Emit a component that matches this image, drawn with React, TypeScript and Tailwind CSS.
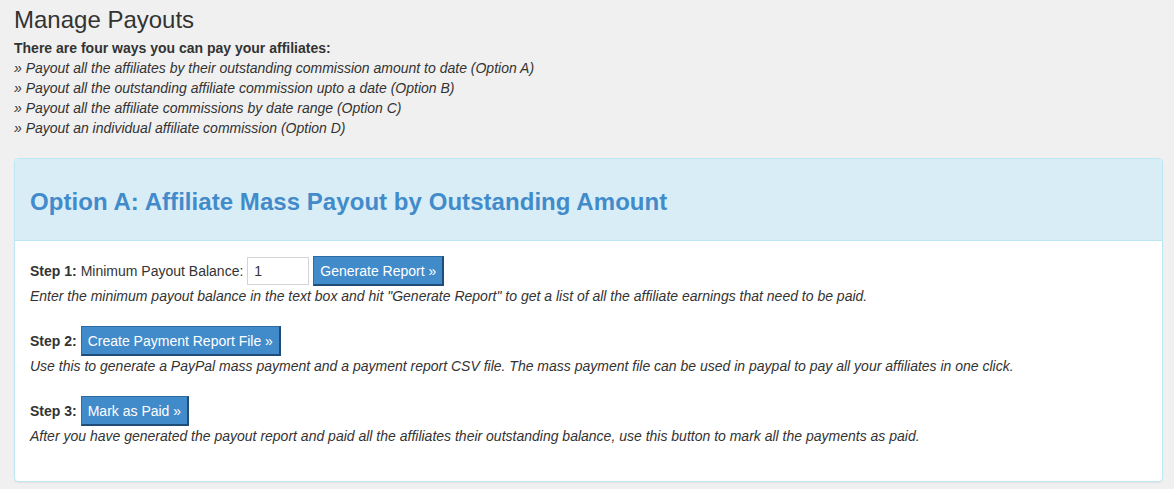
import React from "react";

function BlueButton({ label }: { label: string }) {
  return (
    <button className="h-[30px] px-[6px] bg-[#428bca] text-white text-[14px] leading-[20px] border border-[#2d6ca2] border-r-2 border-b-2 border-r-[#1f4d78] border-b-[#1f4d78]">
      {label}
    </button>
  );
}

function Step({
  n,
  children,
  desc,
}: {
  n: number;
  children: React.ReactNode;
  desc: string;
}) {
  return (
    <div>
      <div className="flex items-center h-[30px]">
        <span className="font-bold">Step {n}:</span>
        {children}
      </div>
      <div className="italic leading-[20px]">{desc}</div>
    </div>
  );
}

export default function App() {
  return (
    <div
      className="min-h-screen bg-[#f0f0f0] text-[#333] text-[14px] leading-[20px] pt-[7px] pb-[8px]"
      style={{ fontFamily: '"Liberation Sans", Arial, sans-serif' }}
    >
      <div className="px-[14px]">
        <h1 className="text-[24px] leading-[26px] text-[#333]">Manage Payouts</h1>
        <div className="mt-[5px]">
          <div className="font-bold">There are four ways you can pay your affiliates:</div>
          <div className="italic">» Payout all the affiliates by their outstanding commission amount to date (Option A)</div>
          <div className="italic">» Payout all the outstanding affiliate commission upto a date (Option B)</div>
          <div className="italic">» Payout all the affiliate commissions by date range (Option C)</div>
          <div className="italic">» Payout an individual affiliate commission (Option D)</div>
        </div>
      </div>

      <div className="ml-[14px] mr-[11px] mt-[20px] bg-white border border-[#bce8f1] rounded-[4px] shadow-[0_1px_2px_rgba(0,0,0,0.06)] overflow-hidden">
        <div className="bg-[#d9edf7] border-b border-[#bce8f1] pl-[15px] pt-[30px] pb-[25px]">
          <h2 className="text-[24px] leading-[26px] font-bold text-[#428bca] tracking-[0.05px]">
            Option A: Affiliate Mass Payout by Outstanding Amount
          </h2>
        </div>
        <div className="pl-[15px] pr-[15px] pt-[15px] pb-[35px] flex flex-col gap-[20px]">
          <Step
            n={1}
            desc={'Enter the minimum payout balance in the text box and hit "Generate Report" to get a list of all the affiliate earnings that need to be paid.'}
          >
            <span className="ml-[4px]">Minimum Payout Balance:</span>
            <input
              defaultValue="1"
              className="ml-[4px] w-[62px] h-[28px] px-[6px] border border-[#d4d4d4] text-[14px] text-[#333] outline-none"
            />
            <span className="ml-[4px]">
              <BlueButton label="Generate Report »" />
            </span>
          </Step>
          <Step
            n={2}
            desc="Use this to generate a PayPal mass payment and a payment report CSV file. The mass payment file can be used in paypal to pay all your affiliates in one click."
          >
            <span className="ml-[4px]">
              <BlueButton label="Create Payment Report File »" />
            </span>
          </Step>
          <Step
            n={3}
            desc="After you have generated the payout report and paid all the affiliates their outstanding balance, use this button to mark all the payments as paid."
          >
            <span className="ml-[4px]">
              <BlueButton label="Mark as Paid »" />
            </span>
          </Step>
        </div>
      </div>
    </div>
  );
}
